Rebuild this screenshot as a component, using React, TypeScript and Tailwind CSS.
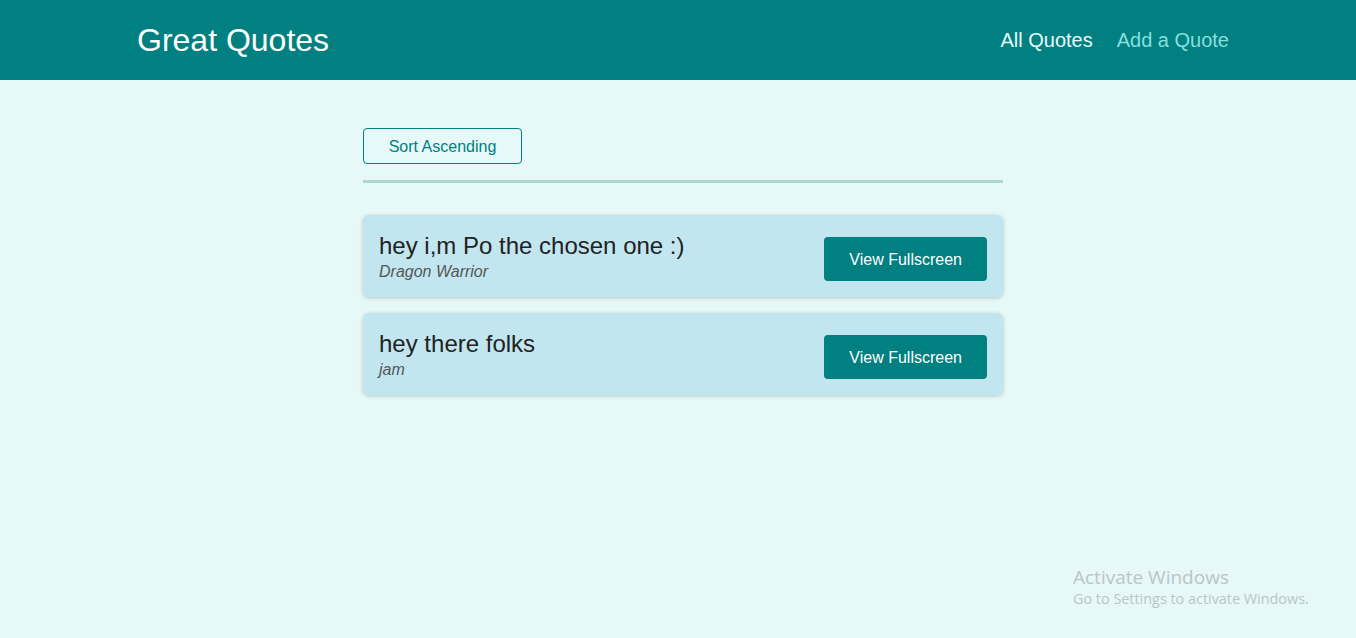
const QUOTES = [
  { id: "q1", text: "hey i,m Po the chosen one :)", author: "Dragon Warrior" },
  { id: "q2", text: "hey there folks", author: "jam" },
];

export default function App() {
  return (
    <div className="relative min-h-screen h-[638px] bg-[#e6f8f8] font-['Liberation_Sans',Arial,sans-serif]">
      {/* header */}
      <header className="flex h-[80px] items-center justify-between bg-[#008080] pl-[137px] pr-[127px]">
        <div className="text-[32px] leading-none text-white">Great Quotes</div>
        <nav className="flex items-center gap-6 text-[20px]">
          <a className="text-[#e6fcfc]">All Quotes</a>
          <a className="text-[#88dfdf]">Add a Quote</a>
        </nav>
      </header>

      {/* list */}
      <main className="ml-[363px] w-[640px] pt-[48px]">
        <button className="h-[36px] w-[159px] rounded-[4px] border border-[#008080] pt-[2px] text-[16px] text-[#008080]">
          Sort Ascending
        </button>
        <div className="mt-[16px] h-[3px] bg-[#aed6d2]" />
        <ul className="mt-[32px] flex flex-col gap-4">
          {QUOTES.map((q) => (
            <li
              key={q.id}
              className="flex h-[82px] items-center justify-between rounded-[6px] bg-[#c2e6ef] px-4 shadow-[0_1px_4px_rgba(0,0,0,0.2)]"
            >
              <figure className="flex flex-col pt-[2px]">
                <blockquote className="text-[24px] leading-[28px] text-[#222]">{q.text}</blockquote>
                <figcaption className="mt-[2px] text-[16px] italic leading-[20px] text-[#555]">{q.author}</figcaption>
              </figure>
              <button className="mt-[6px] h-[44px] rounded-[4px] bg-[#008080] px-[25px] pt-[2px] text-[16px] text-white">
                View Fullscreen
              </button>
            </li>
          ))}
        </ul>
      </main>

      {/* windows watermark */}
      <div className="absolute left-[1073px] top-[565px] font-['Open_Sans','Noto_Sans',sans-serif] text-[#b9c6c6]">
        <div className="text-[19px] leading-[24px]">Activate Windows</div>
        <div className="text-[14.4px] leading-[20px]">Go to Settings to activate Windows.</div>
      </div>
    </div>
  );
}
